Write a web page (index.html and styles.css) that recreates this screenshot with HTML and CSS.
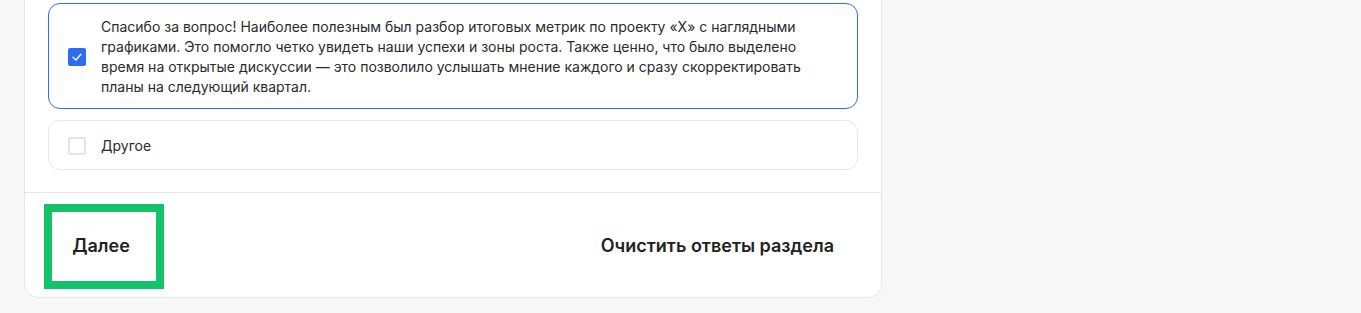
FILE: index.html
```
<!DOCTYPE html>
<html lang="ru">
<head>
    <meta charset="UTF-8">
    <meta name="viewport" content="width=device-width, initial-scale=1.0">
    <title>Опрос</title>
    <link rel="stylesheet" href="styles.css">
</head>
<body>
    <div class="survey-card">
        <div class="options">
            <label class="option option-checked">
                <span class="checkbox checked">
                    <svg width="12" height="12" viewBox="0 0 12 12"><path d="M2 6.3 L4.8 9 L10 3.2" fill="none" stroke="#fff" stroke-width="1.4" stroke-linecap="round" stroke-linejoin="round"/></svg>
                </span>
                <span class="option-text">Спасибо за вопрос! Наиболее полезным был разбор итоговых метрик по проекту «X» с наглядными графиками. Это помогло четко увидеть наши успехи и зоны роста. Также ценно, что было выделено время на открытые дискуссии — это позволило услышать мнение каждого и сразу скорректировать планы на следующий квартал.</span>
            </label>
            <label class="option">
                <span class="checkbox"></span>
                <span class="option-text">Другое</span>
            </label>
        </div>
        <div class="card-footer">
            <button class="btn btn-next">Далее</button>
            <button class="btn btn-clear">Очистить ответы раздела</button>
        </div>
    </div>
</body>
</html>
```

FILE: styles.css
```
body {
    font-family: Inter, "Noto Sans", sans-serif;
    margin: 0;
    padding: 0 24px;
    background-color: #f8f8f8;
    color: #222;
}
.survey-card {
    width: 856px;
    margin-top: -22px;
    background: #fff;
    border: 1px solid #e6e6e6;
    border-radius: 14px;
}
.options {
    padding: 24px 23px 22px;
    display: flex;
    flex-direction: column;
    gap: 11px;
}
.option {
    display: flex;
    align-items: center;
    gap: 15px;
    min-height: 50px;
    box-sizing: border-box;
    padding: 13px 44px 11px 19px;
    border: 1px solid #e8e8e8;
    border-radius: 12px;
    font-size: 14px;
    line-height: 20px;
    color: #2a2a2a;
}
.option-checked {
    border-color: #2f6ef0;
}
.checkbox {
    flex: none;
    width: 18px;
    height: 18px;
    box-sizing: border-box;
    border: 2px solid #e3e5e9;
    border-radius: 2px;
    display: flex;
    align-items: center;
    justify-content: center;
}
.checkbox.checked {
    background: #2b6cf3;
    border-color: #2b6cf3;
}
.card-footer {
    border-top: 1px solid #e6e6e6;
    display: flex;
    justify-content: space-between;
    align-items: center;
    padding: 11px 23px 8px 19px;
}
.btn {
    font-family: inherit;
    font-size: 18px;
    font-weight: 600;
    color: #222;
    background: none;
    border: none;
    cursor: pointer;
}
.btn-next {
    width: 120px;
    height: 85px;
    border: 8px solid #13c36b;
    padding: 0 6px 3px 0;
    text-align: center;
}
.btn-clear {
    padding: 0 24px 3px 20px;
    height: 85px;
}
```
